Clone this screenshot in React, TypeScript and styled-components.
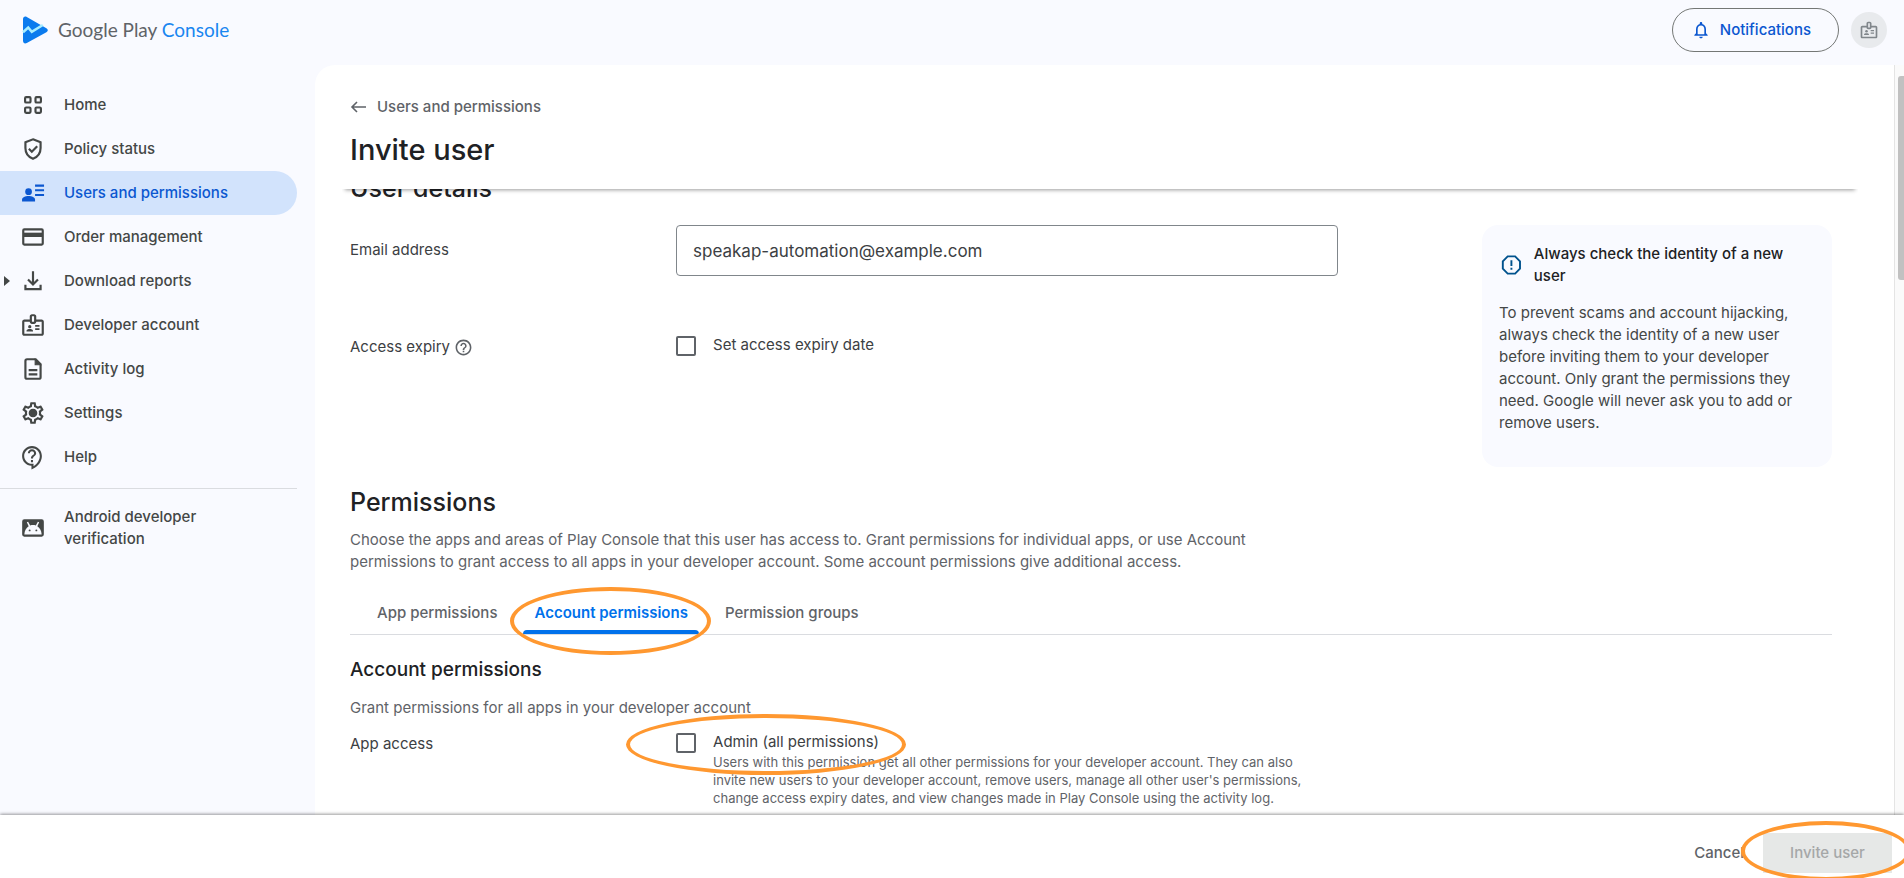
import React, { useState } from 'react';
import styled, { createGlobalStyle } from 'styled-components';
import {
  MdHelpOutline,
  MdNotificationsNone,
  MdOutlineBadge,
  MdOutlineContactSupport,
  MdOutlineSettings,
} from 'react-icons/md';

const color = {
  canvas: '#f9faff',
  surface: '#ffffff',
  ink: '#202124',
  text: '#3c4043',
  nav: '#444746',
  muted: '#5f6368',
  line: '#dadce0',
  blue: '#0b57d0',
  tab: '#0071eb',
  selected: '#d2e3fc',
  marker: '#ff9830',
};

const GlobalStyle = createGlobalStyle`
  *, *::before, *::after { box-sizing: border-box; }
  body {
    margin: 0;
    background: ${color.canvas};
    color: ${color.text};
    font-family: Inter, "Liberation Sans", sans-serif;
    font-size: 15px;
    line-height: 22px;
  }
  h1, h2, h3, p, ul { margin: 0; padding: 0; }
  button, input { font: inherit; color: inherit; }
  a { color: inherit; text-decoration: none; }
`;

const Shell = styled.div`
  display: flex;
  flex-direction: column;
  height: 100vh;
  overflow: hidden;
`;

const TopBar = styled.header`
  display: flex;
  flex: none;
  align-items: flex-start;
  justify-content: space-between;
  height: 65px;
  padding: 8px 17px 0 20px;
`;

const Brand = styled.a`
  display: flex;
  align-items: center;
  gap: 8px;
  height: 44px;
`;

const BrandName = styled.span`
  font-family: Lato, "Liberation Sans", sans-serif;
  font-size: 19px;
  line-height: 24px;
  color: ${color.muted};
`;

const BrandAccent = styled.span`
  color: #1a86f0;
`;

const TopActions = styled.div`
  display: flex;
  align-items: center;
  gap: 12px;
`;

const NotificationsButton = styled.button`
  display: flex;
  align-items: center;
  gap: 9px;
  height: 44px;
  padding: 0 27px 0 18px;
  border: 1px solid #747775;
  border-radius: 22px;
  background: transparent;
  color: ${color.blue};
  font-weight: 500;
`;

const AccountButton = styled.button`
  display: grid;
  place-items: center;
  width: 36px;
  height: 36px;
  padding: 0;
  border: 0;
  border-radius: 50%;
  background: #e8eaed;
  color: #80868b;
`;

const Body = styled.div`
  display: flex;
  flex: 1;
  min-height: 0;
`;

const Sidebar = styled.nav`
  flex: none;
  width: 315px;
  padding: 18px 18px 0 0;
`;

const NavList = styled.ul`
  list-style: none;

  & + & {
    margin-top: 9px;
    padding-top: 9px;
    border-top: 1px solid ${color.line};
  }
`;

const NavLink = styled.a<{ $active?: boolean }>`
  display: grid;
  grid-template-columns: 20px 26px 1fr;
  align-items: center;
  min-height: 44px;
  padding: 8px 0;
  border-radius: 0 22px 22px 0;
  background: ${(p) => (p.$active ? color.selected : 'transparent')};
  color: ${(p) => (p.$active ? color.blue : color.nav)};
  font-weight: 500;
`;

const NavCaret = styled.span`
  display: flex;
  padding-left: 4px;
`;

const NavIcon = styled.span`
  display: flex;
  align-items: center;
  height: 26px;
  margin: -2px 0;
`;

const NavText = styled.span`
  max-width: 200px;
  padding-left: 18px;
`;

const Main = styled.main`
  display: flex;
  flex: 1;
  flex-direction: column;
  min-width: 0;
  border-top-left-radius: 20px;
  background: ${color.surface};
`;

const PageHeader = styled.div`
  flex: none;
  height: 124px;
  margin: 0 36px 0 27px;
  padding: 31px 8px 0;
  background: ${color.surface};
  box-shadow: 0 4px 4px -3px rgba(0, 0, 0, 0.4);
  clip-path: inset(0 0 -8px 0);
  z-index: 1;
`;

const BackLink = styled.a`
  display: flex;
  align-items: center;
  gap: 11px;
  color: ${color.muted};
  font-weight: 500;
`;

const PageTitle = styled.h1`
  margin-top: 12px;
  color: ${color.ink};
  font-size: 29px;
  font-weight: 500;
  line-height: 40px;
`;

const Content = styled.div`
  flex: 1;
  min-height: 0;
  overflow: hidden;
  padding: 0 62px 0 35px;
`;

/* The first section is scrolled partly under the page header. */
const SectionTitle = styled.h2<{ $scrolled?: boolean }>`
  margin-top: ${(p) => (p.$scrolled ? '-17px' : '19px')};
  color: ${color.ink};
  font-size: 25px;
  font-weight: 500;
  line-height: 32px;
`;

const DetailsLayout = styled.div`
  display: flex;
  align-items: flex-start;
  justify-content: space-between;
  gap: 32px;
  margin-top: 21px;
`;

const FormColumn = styled.div`
  display: flex;
  flex: 0 1 auto;
  flex-direction: column;
  gap: 58px;
  width: calc(100% * 2 / 3);
`;

const FieldRow = styled.div<{ $center?: boolean }>`
  display: grid;
  grid-template-columns: 33% 1fr;
  align-items: ${(p) => (p.$center ? 'center' : 'start')};
`;

const FieldLabel = styled.label`
  padding-bottom: 2px;
`;

const FieldName = styled.div`
  display: flex;
  align-items: center;
  gap: 4px;
  padding-top: 2px;
`;

const HelpButton = styled.button`
  display: flex;
  padding: 0;
  border: 0;
  background: none;
  color: ${color.muted};
`;

const TextInput = styled.input`
  width: 100%;
  height: 51px;
  padding: 0 16px;
  border: 1px solid #80868b;
  border-radius: 4px;
  background: ${color.surface};
  font-size: 17px;
`;

const CheckRow = styled.div`
  position: relative;
  display: grid;
  grid-template-columns: 20px 1fr;
  column-gap: 17px;
  justify-self: start;
`;

const Checkbox = styled.input`
  width: 20px;
  height: 20px;
  margin: 2px 0 0;
  appearance: none;
  border: 2px solid ${color.muted};
  border-radius: 2px;

  &:checked {
    border-color: ${color.tab};
    background: ${color.tab};
  }
`;

const CheckHint = styled.p`
  grid-column: 2;
  max-width: 602px;
  color: ${color.muted};
  font-size: 13px;
  line-height: 18px;
`;

const Notice = styled.aside`
  flex: none;
  width: 350px;
  padding: 18px 18px 33px 17px;
  border-radius: 16px;
  background: ${color.canvas};
`;

const NoticeHeading = styled.div`
  display: flex;
  align-items: center;
  gap: 10px;
  padding-right: 8px;
`;

const NoticeTitle = styled.h3`
  color: ${color.ink};
  font-size: 15px;
  font-weight: 500;
`;

const NoticeText = styled.p`
  margin-top: 15px;
  color: ${color.nav};
`;

const Intro = styled.p`
  max-width: 940px;
  margin-top: 11px;
  color: ${color.muted};
`;

const TabList = styled.div`
  display: flex;
  gap: 5px;
  margin-top: 19px;
  padding-left: 11px;
  border-bottom: 1px solid ${color.line};
`;

const TabSlot = styled.div`
  position: relative;
`;

const Tab = styled.button<{ $active?: boolean }>`
  position: relative;
  height: 42px;
  padding: 0 16px;
  border: 0;
  background: none;
  color: ${(p) => (p.$active ? color.tab : color.muted)};
  font-weight: ${(p) => (p.$active ? 600 : 500)};

  &::after {
    position: absolute;
    right: 5px;
    bottom: 0;
    left: 5px;
    height: 4px;
    border-radius: 4px 4px 0 0;
    background: ${(p) => (p.$active ? color.tab : 'transparent')};
    content: '';
  }
`;

const GroupTitle = styled.h3`
  margin-top: 23px;
  color: ${color.ink};
  font-size: 19px;
  font-weight: 500;
  line-height: 24px;
`;

const GroupIntro = styled.p`
  margin: 15px 0 12px;
  color: ${color.muted};
`;

const PermissionGrid = styled.div`
  width: calc(100% * 2 / 3);
`;

const ScrollTrack = styled.div`
  flex: none;
  width: 10px;
  padding: 11px 0 0 3px;
  border-left: 1px solid #e4e4e4;
  background: #fafafa;
`;

const ScrollThumb = styled.div`
  height: 204px;
  border-radius: 3px 0 0 3px;
  background: #c1c1c1;
`;

const ActionBar = styled.footer`
  display: flex;
  flex: none;
  align-items: center;
  justify-content: flex-end;
  gap: 19px;
  padding: 18px 12px 5px;
  background: ${color.surface};
  box-shadow: 0 -1px 3px rgba(0, 0, 0, 0.4);
  z-index: 2;
`;

const CancelButton = styled.button`
  padding: 0;
  border: 0;
  background: none;
  color: ${color.muted};
  font-weight: 500;
`;

const SubmitSlot = styled.div`
  position: relative;
`;

const SubmitButton = styled.button`
  width: 129px;
  height: 40px;
  padding: 0;
  border: 0;
  background: #e6e8e7;
  color: #a5a7a7;
  font-weight: 500;
`;

/* Highlight ring laid over a control. */
const Marker = styled.span`
  position: absolute;
  border: 4px solid ${color.marker};
  border-radius: 50%;
  pointer-events: none;
`;

const TabMarker = styled(Marker)`
  inset: -5px -7px -21px -8px;
`;

const AdminMarker = styled(Marker)`
  top: -17px;
  left: -50px;
  width: 280px;
  height: 61px;
`;

const SubmitMarker = styled(Marker)`
  inset: -12px -19px -8px -22px;
`;

const Icon = ({ children }: { children: React.ReactNode }) => (
  <svg width="26" height="26" viewBox="0 0 24 24" fill="none" stroke="currentColor" strokeWidth="2" aria-hidden="true">
    {children}
  </svg>
);

const LogoIcon = () => (
  <svg width="30" height="30" viewBox="0 0 30 30" aria-hidden="true">
    <path d="M3 4.2C3 1.9 4.9.9 6.8 2l19.6 11.2c1.9 1.1 1.9 2.9 0 4L6.8 28C4.900 29.100 3 28.100 3 25.800Z" fill="#0b7bee" />
    <path d="M3 17.200 8.200 12.500 11.800 16.800 22.800 10" fill="none" stroke="#a8eeff" strokeWidth="2.600" />
  </svg>
);

const HomeIcon = () => (
  <Icon>
    <rect x="4.700" y="4.700" width="5" height="5" rx="1" />
    <rect x="14.300" y="4.700" width="5" height="5" rx="1" />
    <rect x="4.700" y="14.300" width="5" height="5" rx="1" />
    <rect x="14.300" y="14.300" width="5" height="5" rx="1" />
  </Icon>
);

const ShieldIcon = () => (
  <Icon>
    <path d="M12 3.100 19 5.700v5.400c0 4.600-2.900 8.400-7 9.900-4.100-1.500-7-5.300-7-9.900V5.700Z" />
    <path d="m8.200 11.800 2.700 2.700 5-5" />
  </Icon>
);

const UsersIcon = () => (
  <Icon>
    <g fill="currentColor" stroke="none">
      <circle cx="7.900" cy="10.800" r="3.100" />
      <path d="M1.900 19.900v-1.800c0-2 3-3.300 6-3.300s6 1.300 6 3.300v1.800Z" />
    </g>
    <path d="M13.900 5.200h8.300M13.900 9.500h8.300M13.900 13.800h8.300" strokeWidth="1.900" />
  </Icon>
);

const CardIcon = () => (
  <Icon>
    <rect x="3" y="5" width="18" height="14" rx="1" />
    <path d="M3 10h18" strokeWidth="4" />
  </Icon>
);

const DownloadIcon = () => (
  <Icon>
    <path d="M12 3v12M7.400 10.600 12 15.200l4.600-4.600M5 15.500V19.500h14v-4" />
  </Icon>
);

const LogIcon = () => (
  <Icon>
    <path d="M14.500 3H6.500c-.8 0-1.500.7-1.500 1.500v15c0 .8.7 1.500 1.500 1.500h11c.8 0 1.500-.7 1.500-1.500V7.500Z" />
    <path d="M14 3v5h5Z" fill="currentColor" strokeWidth="1" />
    <path d="M8 13h8M8 17h8" />
  </Icon>
);

const SettingsIcon = () => (
  <Icon>
    <MdOutlineSettings size={24} />
    <circle cx="12" cy="12" r="2.500" fill="currentColor" />
  </Icon>
);

const AndroidIcon = () => (
  <Icon>
    <rect x="3" y="5" width="18" height="14" rx="1" fill="currentColor" />
    <path
      d="M4 17.900c.2-3.500 1.700-6.100 4-7.500L6.300 6.700l1.200-.5 1.900 3.400c1.700-.6 3.500-.6 5.200 0l1.900-3.400 1.200.5L16 10.400c2.300 1.400 3.800 4 4 7.500Z"
      fill={color.canvas}
      stroke="none"
    />
    <g fill="currentColor" stroke="none">
      <circle cx="8.900" cy="14.200" r=".9" />
      <circle cx="15.100" cy="14.200" r=".9" />
    </g>
  </Icon>
);

const CaretIcon = () => (
  <svg width="6" height="10" viewBox="0 0 6 10" fill="currentColor" aria-hidden="true">
    <path d="M0 0v10l6-5Z" />
  </svg>
);

const BackIcon = () => (
  <svg width="16" height="12" viewBox="0 0 16 12" fill="none" stroke="currentColor" strokeWidth="1.600" aria-hidden="true">
    <path d="M16 6H2M7 1 2 6l5 5" />
  </svg>
);

const AlertIcon = () => (
  <svg width="26" height="26" viewBox="0 0 26 26" fill="none" stroke="#00528d" strokeWidth="2" aria-hidden="true">
    <path d="M9.100 4h7.800L22 9.100v7.800L16.900 22H9.100L4 16.900V9.100Z" />
    <path d="M13 8v6M13 16v2" />
  </svg>
);

type NavEntry = { label: string; icon: React.ReactNode; active?: boolean; expandable?: boolean };

const primaryNav: NavEntry[] = [
  { label: 'Home', icon: <HomeIcon /> },
  { label: 'Policy status', icon: <ShieldIcon /> },
  { label: 'Users and permissions', icon: <UsersIcon />, active: true },
  { label: 'Order management', icon: <CardIcon /> },
  { label: 'Download reports', icon: <DownloadIcon />, expandable: true },
  { label: 'Developer account', icon: <MdOutlineBadge size={26} /> },
  { label: 'Activity log', icon: <LogIcon /> },
  { label: 'Settings', icon: <SettingsIcon /> },
  { label: 'Help', icon: <MdOutlineContactSupport size={25} /> },
];

const secondaryNav: NavEntry[] = [{ label: 'Android developer verification', icon: <AndroidIcon /> }];

const NavItems = ({ items }: { items: NavEntry[] }) => (
  <NavList>
    {items.map((item) => (
      <li key={item.label}>
        <NavLink href="#" $active={item.active} aria-current={item.active ? 'page' : undefined}>
          <NavCaret>{item.expandable && <CaretIcon />}</NavCaret>
          <NavIcon>{item.icon}</NavIcon>
          <NavText>{item.label}</NavText>
        </NavLink>
      </li>
    ))}
  </NavList>
);

const tabs = ['App permissions', 'Account permissions', 'Permission groups'];

export default function App() {
  const [email, setEmail] = useState('speakap-automation@example.com');
  const [tab, setTab] = useState('Account permissions');

  return (
    <>
      <GlobalStyle />
      <Shell>
        <TopBar>
          <Brand href="#">
            <LogoIcon />
            <BrandName>
              Google Play <BrandAccent>Console</BrandAccent>
            </BrandName>
          </Brand>
          <TopActions>
            <NotificationsButton type="button">
              <MdNotificationsNone size={20} />
              Notifications
            </NotificationsButton>
            <AccountButton type="button" aria-label="Account">
              <MdOutlineBadge size={20} />
            </AccountButton>
          </TopActions>
        </TopBar>
        <Body>
          <Sidebar>
            <NavItems items={primaryNav} />
            <NavItems items={secondaryNav} />
          </Sidebar>
          <Main>
            <PageHeader>
              <BackLink href="#">
                <BackIcon />
                Users and permissions
              </BackLink>
              <PageTitle>Invite user</PageTitle>
            </PageHeader>
            <Content>
              <SectionTitle $scrolled>User details</SectionTitle>
              <DetailsLayout>
                <FormColumn>
                  <FieldRow $center>
                    <FieldLabel htmlFor="email">Email address</FieldLabel>
                    <TextInput id="email" type="email" value={email} onChange={(e) => setEmail(e.target.value)} />
                  </FieldRow>
                  <FieldRow>
                    <FieldName>
                      Access expiry
                      <HelpButton type="button" aria-label="About access expiry">
                        <MdHelpOutline size={19} />
                      </HelpButton>
                    </FieldName>
                    <CheckRow>
                      <Checkbox id="expiry" type="checkbox" />
                      <label htmlFor="expiry">Set access expiry date</label>
                    </CheckRow>
                  </FieldRow>
                </FormColumn>
                <Notice>
                  <NoticeHeading>
                    <AlertIcon />
                    <NoticeTitle>Always check the identity of a new user</NoticeTitle>
                  </NoticeHeading>
                  <NoticeText>
                    To prevent scams and account hijacking, always check the identity of a new user before inviting
                    them to your developer account. Only grant the permissions they need. Google will never ask you to
                    add or remove users.
                  </NoticeText>
                </Notice>
              </DetailsLayout>
              <SectionTitle>Permissions</SectionTitle>
              <Intro>
                Choose the apps and areas of Play Console that this user has access to. Grant permissions for
                individual apps, or use Account permissions to grant access to all apps in your developer account. Some
                account permissions give additional access.
              </Intro>
              <TabList role="tablist">
                {tabs.map((name) => (
                  <TabSlot key={name}>
                    <Tab type="button" role="tab" aria-selected={tab === name} $active={tab === name} onClick={() => setTab(name)}>
                      {name}
                    </Tab>
                    {name === 'Account permissions' && <TabMarker />}
                  </TabSlot>
                ))}
              </TabList>
              <GroupTitle>Account permissions</GroupTitle>
              <GroupIntro>Grant permissions for all apps in your developer account</GroupIntro>
              <PermissionGrid>
                <FieldRow>
                  <FieldName>App access</FieldName>
                  <CheckRow>
                    <Checkbox id="admin" type="checkbox" aria-describedby="admin-hint" />
                    <label htmlFor="admin">Admin (all permissions)</label>
                    <CheckHint id="admin-hint">
                      Users with this permission get all other permissions for your developer account. They can also
                      invite new users to your developer account, remove users, manage all other user's permissions,
                      change access expiry dates, and view changes made in Play Console using the activity log.
                    </CheckHint>
                    <AdminMarker />
                  </CheckRow>
                </FieldRow>
              </PermissionGrid>
            </Content>
          </Main>
          <ScrollTrack>
            <ScrollThumb />
          </ScrollTrack>
        </Body>
        <ActionBar>
          <CancelButton type="button">Cancel</CancelButton>
          <SubmitSlot>
            <SubmitButton type="button" disabled>
              Invite user
            </SubmitButton>
            <SubmitMarker />
          </SubmitSlot>
        </ActionBar>
      </Shell>
    </>
  );
}
